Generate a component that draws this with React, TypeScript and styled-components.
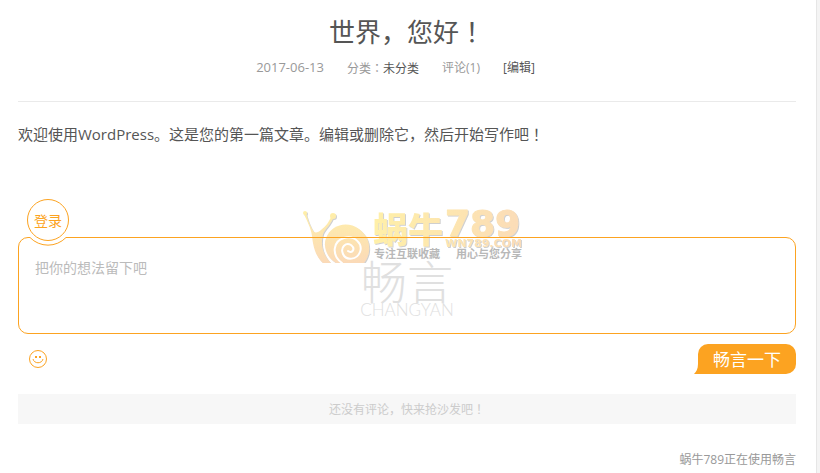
import React from "react";
import styled, { createGlobalStyle } from "styled-components";

const orange = "#fca321";
const sans = `"Open Sans", "Noto Sans CJK SC", sans-serif`;

const GlobalStyle = createGlobalStyle`
  * { box-sizing: border-box; }
  body { margin: 0; background: #f4f4f4; font-family: ${sans}; color: #555; }
  a { color: inherit; text-decoration: none; }
`;

const Page = styled.main`
  margin-right: 3px;
  min-height: 100vh;
  padding: 12px 20px 0 18px;
  background: #fff;
  border-right: 1px solid #e6e6e6;
`;

const Header = styled.header`
  display: flex;
  flex-direction: column;
  align-items: center;
  gap: 7px;
  padding-bottom: 24px;
  border-bottom: 1px solid #eaeaea;
`;

const Title = styled.h1`
  margin: 0;
  font-size: 26px;
  line-height: 38px;
  font-weight: 400;
`;

/* Full-width marks set in the middle of their cell. */
const Mark = styled.span`
  font-family: "Noto Sans CJK TC", sans-serif;
`;

const Meta = styled.div`
  display: flex;
  height: 19px;
  font-size: 12px;
  line-height: 19px;
  color: #999;
  > * { margin-right: 23px; }
  a { color: #555; }
`;

const PostDate = styled.time`
  font-size: 13px;
`;

const Article = styled.p`
  margin: 21px 0 54px;
  font-size: 15px;
  line-height: 22px;
`;

const Comments = styled.form`
  position: relative;
  display: flex;
  flex-direction: column;
`;

const Login = styled.button`
  position: relative;
  z-index: 2;
  width: 42px;
  height: 42px;
  margin: 0 0 -4px 9px;
  padding: 0;
  border: 1px solid ${orange};
  border-radius: 50%;
  background: #fff;
  color: ${orange};
  font: 14px/42px ${sans};
`;

const Notch = styled.svg`
  position: absolute;
  z-index: 1;
  left: 8px;
  top: -1px;
`;

const Box = styled.div`
  position: relative;
  height: 97px;
  border: 1px solid ${orange};
  border-radius: 10px;
`;

const Message = styled.textarea`
  display: block;
  position: relative;
  width: 100%;
  height: 100%;
  padding: 19px 16px;
  border: 0;
  outline: 0;
  resize: none;
  background: transparent;
  font: 14px/22px ${sans};
  color: #555;
  &::placeholder { color: #bbb; opacity: 1; }
`;

const Brand = styled.div`
  position: absolute;
  left: 50%;
  top: 19px;
  transform: translateX(-50%);
  display: flex;
  flex-direction: column;
  align-items: center;
  gap: 2px;
  color: #e0e0e0;
  white-space: nowrap;
`;

const BrandName = styled.span`
  font: 300 46px/44px "Noto Sans CJK SC", sans-serif;
`;

const BrandLatin = styled.span`
  font: 300 17px/14px Lato, sans-serif;
`;

const Watermark = styled.svg`
  position: absolute;
  left: 50%;
  top: -10px;
  margin-left: -105px;
  pointer-events: none;
`;

const Tools = styled.div`
  display: flex;
  justify-content: space-between;
  align-items: center;
  height: 30px;
  margin: 10px 0 20px;
`;

const Emoji = styled.button`
  display: flex;
  margin-left: 10px;
  padding: 0;
  border: 0;
  background: none;
`;

const Submit = styled.button`
  position: relative;
  width: 98px;
  height: 30px;
  padding: 0;
  border: 0;
  border-radius: 10px 10px 10px 0;
  background: ${orange};
  color: #fff;
  font: 17px/30px "Noto Sans CJK SC", sans-serif;
`;

const Tail = styled.svg`
  position: absolute;
  left: -4px;
  bottom: 0;
`;

const Empty = styled.div`
  height: 30px;
  background: #f7f7f7;
  color: #ccc;
  font-size: 12px;
  line-height: 30px;
  text-align: center;
`;

const Footer = styled.footer`
  margin-top: 26px;
  font-size: 12px;
  line-height: 20px;
  text-align: right;
  color: #999;
`;

function SnailMark() {
  return (
    <Watermark width="240" height="74" viewBox="0 -20 240 74" aria-hidden="true">
      <defs>
        <linearGradient id="shell" x1="0" y1="0" x2="0" y2="54" gradientUnits="userSpaceOnUse">
          <stop offset="0" stopColor="#fff0a8" />
          <stop offset="1" stopColor="#fbdab8" />
        </linearGradient>
        <linearGradient id="name" x1="70" y1="0" x2="220" y2="0" gradientUnits="userSpaceOnUse">
          <stop offset="0" stopColor="#fff0a8" />
          <stop offset="1" stopColor="#fbdcb8" />
        </linearGradient>
        <filter id="edge" x="-5%" y="-5%" width="110%" height="115%">
          <feDropShadow dx="1" dy="1" stdDeviation="0.5" floodColor="#888" floodOpacity="0.4" />
        </filter>
      </defs>
      <g filter="url(#edge)">
        <g fill="url(#shell)">
          <circle cx="3" cy="4" r="2" />
          <circle cx="31" cy="7" r="3" />
          <path d="M2 5 L4 4 C6 12 9 19 12 23 C14 24 17 23 19 21 C24 17 27 13 29 8 L31 9 C29 15 23 20 21 25 C18 36 21 46 29 54 H21 C13 47 11 36 10 27 C9 19 5 12 2 5Z" />
          <path d="M34 54 C24 48 21 37 24 29 C29 16 45 11 57 20 C69 29 70 44 62 54Z" />
        </g>
        <path
          d="M40 54 C29 46 31 32 42 29 C53 26 61 35 58 43 C55 51 44 52 41 45 C38 38 44 33 49 36 C54 40 50 45 46 42"
          fill="none"
          stroke="#fff"
          strokeWidth="2"
          strokeLinecap="round"
        />
        <g fill="url(#name)">
          <text x="71" y="34" fontFamily="Noto Sans CJK SC, sans-serif" fontWeight="900" fontSize="35">蜗牛</text>
          <text
            x="143"
            y="27"
            fontFamily="DejaVu Sans, sans-serif"
            fontWeight="700"
            fontSize="36"
            stroke="url(#name)"
            strokeLinejoin="round"
          >
            789
          </text>
          <text x="143" y="38" fontFamily="DejaVu Sans, sans-serif" fontWeight="700" fontSize="11">WN789.COM</text>
        </g>
      </g>
      <g fill="#b8b8b8" fontFamily="Noto Sans CJK SC, sans-serif" fontWeight="700" fontSize="11">
        <text x="72" y="49">专注互联收藏</text>
        <text x="154" y="49">用心与您分享</text>
      </g>
    </Watermark>
  );
}

export default function App() {
  return (
    <>
      <GlobalStyle />
      <Page>
        <Header>
          <Title>世界，您好<Mark>！</Mark></Title>
          <Meta>
            <PostDate>2017-06-13</PostDate>
            <span>分类<Mark>：</Mark><a href="#category">未分类</a></span>
            <span>评论(1)</span>
            <a href="#edit">[编辑]</a>
          </Meta>
        </Header>
        <Article>
          欢迎使用WordPress。这是您的第一篇文章。编辑或删除它，然后开始写作吧<Mark>！</Mark>
        </Article>
        <Comments>
          <Login type="button">登录</Login>
          <Notch width="44" height="48" viewBox="0 0 44 48" fill="none">
            <path d="M4 38 H40 V42 H4Z" fill="#fff" />
            <path d="M4 39.5 A25 25 0 0 0 40 39.5" fill="#fff" stroke={orange} />
          </Notch>
          <SnailMark />
          <Box>
            <Brand>
              <BrandName>畅言</BrandName>
              <BrandLatin>CHANGYAN</BrandLatin>
            </Brand>
            <Message aria-label="评论" placeholder="把你的想法留下吧" />
          </Box>
          <Tools>
            <Emoji type="button" aria-label="表情">
              <svg width="20" height="20" viewBox="0 0 20 20" fill="none" stroke={orange}>
                <circle cx="10" cy="10" r="8.5" />
                <path d="M5 10 C6 15 14 15 15 10" />
                <path d="M7 8 H9 M11 8 H13" strokeWidth="2" />
              </svg>
            </Emoji>
            <Submit type="submit">
              <Tail width="6" height="10" viewBox="0 0 6 10">
                <path d="M4 0 C4 5 2 8 0 10 H6 V0Z" fill={orange} />
              </Tail>
              畅言一下
            </Submit>
          </Tools>
        </Comments>
        <Empty>还没有评论，快来抢沙发吧<Mark>！</Mark></Empty>
        <Footer><a href="#changyan">蜗牛789正在使用畅言</a></Footer>
      </Page>
    </>
  );
}
